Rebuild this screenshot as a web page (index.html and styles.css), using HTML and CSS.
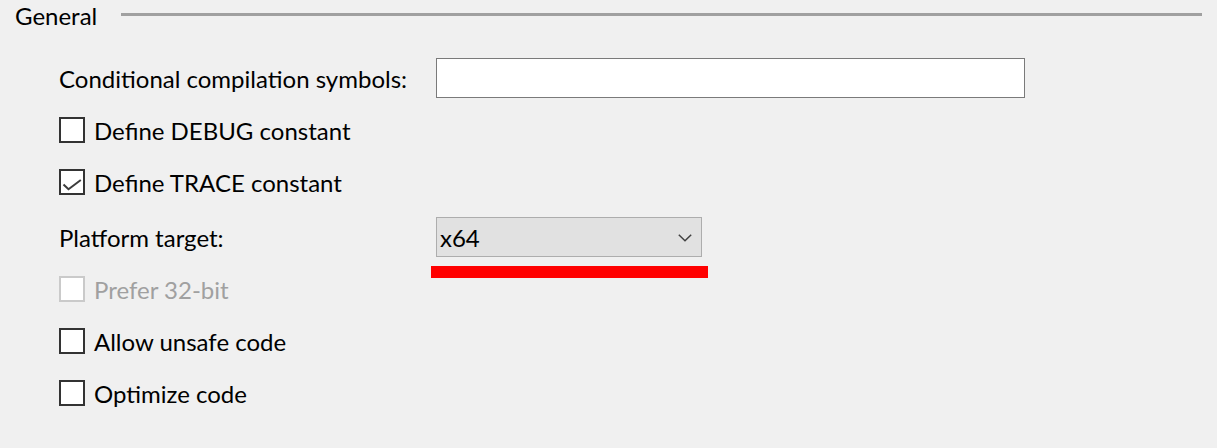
FILE: index.html
```html
<!DOCTYPE html>
<html lang="en">
<head>
    <meta charset="UTF-8">
    <title>Build properties</title>
    <link rel="stylesheet" href="styles.css">
</head>
<body>
    <section class="group">
        <div class="group-header">
            <span class="group-title">General</span>
            <span class="group-rule"></span>
        </div>

        <div class="form">
            <div class="row">
                <label class="field-label" for="symbols">Conditional compilation symbols:</label>
                <input id="symbols" class="text-input" type="text">
            </div>

            <label class="row check">
                <span class="box"></span>
                Define DEBUG constant
            </label>

            <label class="row check">
                <span class="box">
                    <svg width="22" height="22" viewBox="0 0 22 22"><path d="M2.5 13.5 L7.5 18.2 L19.8 9" fill="none" stroke="#3c3c3c" stroke-width="2"/></svg>
                </span>
                Define TRACE constant
            </label>

            <div class="row row-platform">
                <span class="field-label">Platform target:</span>
                <div class="select">
                    <span class="select-value">x64</span>
                    <svg class="chevron" width="14" height="8" viewBox="0 0 14 8"><path d="M0.8 0.8 L7 6.8 L13.2 0.8" fill="none" stroke="#404040" stroke-width="1.5"/></svg>
                    <span class="highlight"></span>
                </div>
            </div>

            <label class="row check disabled">
                <span class="box"></span>
                Prefer 32-bit
            </label>

            <label class="row check">
                <span class="box"></span>
                Allow unsafe code
            </label>

            <label class="row check">
                <span class="box"></span>
                Optimize code
            </label>
        </div>
    </section>
</body>
</html>
```

FILE: styles.css
```css
* {
    box-sizing: border-box;
}

body {
    margin: 0;
    background-color: #f0f0f0;
    font-family: Lato, "Open Sans", sans-serif;
    font-size: 24px;
    color: #000;
}

.group-header {
    display: flex;
    align-items: flex-start;
    height: 32px;
    padding-left: 15px;
    padding-right: 15px;
}

.group-title {
    line-height: 32px;
}

.group-rule {
    flex: 1;
    height: 3px;
    margin-top: 13px;
    margin-left: 24px;
    background-color: #a0a0a0;
}

.form {
    margin-top: 20px;
    padding-left: 59px;
}

.row {
    display: flex;
    align-items: center;
    height: 52px;
}

.row-platform {
    height: 55px;
    padding-top: 3px;
}

.field-label {
    width: 377px;
}

.text-input {
    width: 589px;
    height: 40px;
    margin: 0;
    border: 1px solid #7a7a7a;
    background-color: #fff;
    font: inherit;
}

.check .box {
    display: flex;
    align-items: center;
    justify-content: center;
    width: 26px;
    height: 26px;
    margin-right: 9px;
    border: 2px solid #333;
    background-color: #fff;
}

.check.disabled {
    color: #a0a0a0;
}

.check.disabled .box {
    border-color: #cacaca;
}

.select {
    position: relative;
    display: flex;
    align-items: center;
    justify-content: space-between;
    width: 266px;
    height: 40px;
    padding-left: 3px;
    padding-right: 9px;
    border: 1px solid #adadad;
    background-color: #e1e1e1;
}

.chevron {
    margin-top: 1px;
}

/* red annotation under the dropdown */
.highlight {
    position: absolute;
    left: -6px;
    top: 48px;
    width: 277px;
    height: 12px;
    background-color: #ff0000;
}
```
